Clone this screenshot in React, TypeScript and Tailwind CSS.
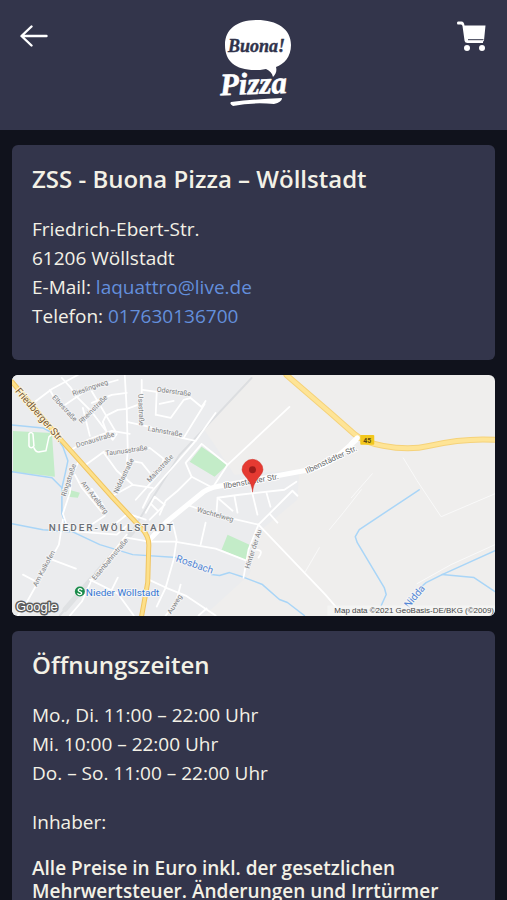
import { ReactNode } from "react";

const STREETS = [
  "M36 401 L52 389 L78 375",
  "M50 390 L55 399 L62 407 L90 388 L118 380",
  "M62 378 L71 388 L76 396 L92 412 L113 440 L117 434",
  "M83 408 L90 436",
  "M92 403 L112 395 L127 393",
  "M90 388 L116 432",
  "M106 430 L103 422 L106 416 L118 410 L127 409",
  "M125 375 L127 410 L128 450 L126 478",
  "M73 449 L88 440 L112 431 L130 434",
  "M127 409 L141 404 M142 380 L142 400",
  "M127 422 L150 427 L182 438 L196 441 L216 413",
  "M143 390 L157 392 L156 415",
  "M157 415 L171 418 L184 400 L191 398 L202 407 L206 401",
  "M160 404 L174 401 M184 438 L205 404 M196 441 L150 494 L143 508",
  "M86 465 L104 452 L130 452 L150 448 L164 459 L160 473 L136 500",
  "M104 453 L117 471 L133 485 L113 496 M133 485 L153 488",
  "M131 461 L142 463 L150 473",
  "M202 444 L186 463 L192 477 L213 488 L228 465 L202 444",
  "M228 465 L290 407",
  "M192 477 L178 491 L166 501 L160 515",
  "M78 463 L72 476 L70 493 L63 514 L67 526 L78 532 L117 535 L127 526",
  "M75 475 L82 488 L105 516 L84 530 M92 489 L104 506",
  "M63 520 L59 545 L44 572 L26 604 L18 616 M52 560 L76 569 M23 575 L36 582",
  "M127 535 L92 580 L82 602 L70 616 M90 580 L118 594 L134 616 M112 590 L118 578",
  "M127 538 L149 542 L175 542 L216 549 L247 561",
  "M173 523 L177 540 L174 560 L166 588 L157 607",
  "M149 580 L166 588 L186 596 L216 616 M181 585 L176 604 L166 616 M207 609 L199 616",
  "M206 523 L201 545",
  "M187 505 L216 515 L259 525 L326 595 L344 616",
  "M259 525 L249 550 L244 578",
  "M259 525 L293 491 L298 496 M270 514 L278 523",
  "M217 512 L218 498 L240 495 L285 490 L297 482",
  "M235 497 L238 513 M252 490 L258 515 M267 493 L271 507",
  "M218 498 L233 511 M253 550 Q266 549 259 558",
  "M146 513 L155 497 L165 505 L150 520 M151 504 L158 511",
  "M108 530 L128 514 L146 520",
];

const PATHS = [
  "M352 498 L373 474 M404 458 L418 481 L442 517 L496 494",
  "M330 530 L344 513 L362 490 M418 584 L452 565 L496 545",
  "M306 572 L320 548",
];

const RIVERS = [
  "M12 425 L43 428 L54 434 L63 447 L68 461 L65 475 L62 488 L62 514 L68 530 L100 545 L133 555 L177 558",
  "M12 472 L52 478 L62 488",
  "M12 524 L43 530 L70 532",
  "M212 575 L220 576 L230 573 L245 578 L263 585 L280 600 L288 603 L305 616",
  "M420 490 L360 530 L356 537 L358 543 L385 588 L387 595 L382 606",
  "M496 551 L443 575 L427 583 L419 590",
  "M443 575 L475 578 L496 592",
];

type Label = { text: string; x: number; y: number; turn: number };

const LABELS: Label[] = [
  { text: "Rieslingweg", x: 91, y: 390, turn: -19 },
  { text: "Elbestraße", x: 63, y: 410, turn: 47 },
  { text: "Rheinstraße", x: 95, y: 411, turn: -45 },
  { text: "Oderstraße", x: 174, y: 394, turn: 8 },
  { text: "Usastraße", x: 139, y: 410, turn: 88 },
  { text: "Lahnstraße", x: 165, y: 434, turn: 10 },
  { text: "Donaustraße", x: 96, y: 442, turn: -17 },
  { text: "Taunusstraße", x: 127, y: 453, turn: -8 },
  { text: "Niddastraße", x: 126, y: 477, turn: -64 },
  { text: "Mainstraße", x: 162, y: 470, turn: -47 },
  { text: "Ringstraße", x: 71, y: 481, turn: -72 },
  { text: "Am Azelberg", x: 93, y: 499, turn: 52 },
  { text: "Am Kalkofen", x: 46, y: 570, turn: -62 },
  { text: "Eisenbahnstraße", x: 112, y: 561, turn: -50 },
  { text: "Wachtelweg", x: 215, y: 517, turn: 16 },
  { text: "Hinter der Au", x: 256, y: 550, turn: -72 },
  { text: "Auweg", x: 177, y: 606, turn: -58 },
];

function AreaMap() {
  return (
    <svg
      viewBox="12 375 484 241"
      role="img"
      aria-label="Karte von Nieder-Wöllstadt"
      className="block h-auto w-full rounded-md bg-[#efeeed]"
      fill="none"
      strokeLinejoin="round"
      strokeLinecap="round"
      fontFamily="Roboto, sans-serif"
      textAnchor="middle"
    >
      <path d="M12 375 H252 L205 430 L235 475 L300 470 L298 500 L262 530 L250 575 L205 616 H12 Z" fill="#ebecee" />
      <path d="M13 431 L52 433 L55 477 L13 472 Z M202 447 L228 465 L215 477 L190 462 Z M228 535 L250 545 L247 561 L222 550 Z M69 490 L80 493 L78 498 L68 497 Z" fill="#c3ecc8" />
      <path d="M252 378 L180 455 L133 530 L60 616" stroke="#dcdee1" strokeWidth="2" />
      <path d="M133 532 L65 610" stroke="#dfe1e3" strokeWidth="5" />
      {RIVERS.map((d) => <path key={d} d={d} stroke="#a9d5f7" strokeWidth="1.5" />)}
      {PATHS.map((d) => <path key={d} d={d} stroke="#f9f9f9" strokeWidth="1" />)}
      {STREETS.map((d) => <path key={d} d={d} stroke="#ffffff" strokeWidth="1.8" />)}
      <path d="M29 434 Q31 431 33 434 L34 446 Q31 450 29 446 Z M34 448 Q36 453 40 452 L46 451 L49 437 L57 430" stroke="#ffffff" strokeWidth="1.5" />
      <path d="M149 541 L167 522 L204 492 Q211 487 228 485 L310 470 Q326 467 341 454 L357 440" stroke="#ffffff" strokeWidth="5" />
      <path d="M12 382 L62 441 L113 498 L143 530 Q150 538 149 548 L148 583 L142 616" stroke="#f0c562" strokeWidth="5" />
      <path d="M12 382 L62 441 L113 498 L143 530 Q150 538 149 548 L148 583 L142 616" stroke="#fde08a" strokeWidth="3" />
      <path d="M287 375 L330 412 L355 434 Q364 442 384 446 Q410 451 430 446 Q466 438 496 440" stroke="#f5d27a" strokeWidth="6" />
      <path d="M287 375 L330 412 L355 434 Q364 442 384 446 Q410 451 430 446 Q466 438 496 440" stroke="#fee496" strokeWidth="4" />
      <path d="M352 444 L358 438" stroke="#ffffff" strokeWidth="5" />

      <g fontSize="7" fill="#7d7f82" stroke="#f4f4f5" strokeWidth="2" paintOrder="stroke">
        {LABELS.map((l) => (
          <text key={l.text} transform={`translate(${l.x} ${l.y}) rotate(${l.turn})`}>{l.text}</text>
        ))}
      </g>
      <g fontSize="8" fill="#6a6c6e" stroke="#ffffff" strokeWidth="2" paintOrder="stroke">
        <text transform="translate(252 484) rotate(-10)">Ilbenstädter Str.</text>
        <text transform="translate(333 462) rotate(-25)">Ilbenstädter Str.</text>
      </g>
      <text transform="translate(37 417) rotate(49)" fontSize="10" fill="#7b5b33" stroke="#fff6dc" strokeWidth="2" paintOrder="stroke">Friedberger Str.</text>
      <text x="112" y="531" fontSize="10" fontWeight="500" letterSpacing="2" fill="#6b6f75" stroke="#f5f5f5" strokeWidth="2" paintOrder="stroke">NIEDER-WÖLLSTADT</text>
      <text transform="translate(194 568) rotate(19)" fontSize="10" fill="#5286d6" stroke="#f5f5f5" strokeWidth="2" paintOrder="stroke">Rosbach</text>
      <text transform="translate(418 599) rotate(-50)" fontSize="10" fill="#5286d6" stroke="#f5f5f5" strokeWidth="2" paintOrder="stroke">Nidda</text>
      <circle cx="80" cy="592" r="5" fill="#1b8c4b" />
      <path d="M82 590 Q80 588 78.500 590 Q78 591.500 80 592 Q82.500 593 81.500 594.500 Q79.500 596 78 594" stroke="#ffffff" strokeWidth="1.300" />
      <text x="86" y="596" fontSize="10" textAnchor="start" fill="#3577d4" stroke="#f5f5f5" strokeWidth="2" paintOrder="stroke">Nieder Wöllstadt</text>

      <rect x="361" y="435" width="14" height="10" rx="1" fill="#f2c71d" />
      <text x="368" y="443" fontSize="7" fontWeight="700" fill="#5c4a10">45</text>

      <path d="M253 492 Q252.500 484 247 478 Q242.500 473 242.500 470 A10.500 10.500 0 0 1 263.500 470 Q263.500 473 259 478 Q253.500 484 253 492 Z" fill="#e53a32" stroke="#cf3029" strokeWidth="0.5" />
      <circle cx="253" cy="470" r="3.500" fill="#9c1c1a" />

      <rect x="328" y="606" width="168" height="10" fill="#f6f6f5" fillOpacity="0.7" />
      <text x="495" y="614" fontSize="8" textAnchor="end" fill="#454545" fontFamily="Liberation Sans, sans-serif">Map data ©2021 GeoBasis-DE/BKG (©2009)</text>
      <text x="16" y="612" fontSize="13" textAnchor="start" fill="#ffffff" stroke="#5d5d5d" strokeWidth="3" paintOrder="stroke" fontFamily="Liberation Sans, sans-serif">Google</text>
    </svg>
  );
}

function Logo() {
  return (
    <svg
      viewBox="0 0 76 88"
      role="img"
      aria-label="Buona Pizza"
      className="h-[88px] w-[76px]"
      fontFamily="Liberation Serif, serif"
      fontStyle="italic"
      fontWeight="700"
      strokeLinejoin="round"
    >
      <path d="M41 0 C61 0 75 9 75 25 C75 37 68 44 60 47 C61 51 60 54 57 57 C56 53 54 51 50 49 C46 50 42 50 39 50 C19 50 9 41 9 25 C9 9 21 0 41 0 Z" fill="#ffffff" />
      <text x="12" y="32" fontSize="18" fill="#30334b" stroke="#30334b" strokeWidth="0.4">Buona!</text>
      <g fontSize="31" transform="rotate(-2 38 70)">
        <text x="4" y="74" fill="#33354b" stroke="#33354b" strokeWidth="4">Pizza</text>
        <text x="4" y="74" fill="#ffffff" stroke="#ffffff" strokeWidth="0.6">Pizza</text>
      </g>
      <path d="M15 82 Q40 79 66 78 Q66 82 58 84 Q36 82 17 86 Q13 84 15 82 Z" fill="#ffffff" />
    </svg>
  );
}

function Header() {
  return (
    <header className="flex items-start justify-between bg-[#33354b] px-5 pt-5 pb-[22px]">
      <button type="button" aria-label="Zurück" className="flex h-8 w-8 items-center">
        <svg viewBox="0 0 28 22" className="h-[22px] w-7" fill="none" stroke="#ffffff" strokeWidth="2.4" strokeLinecap="round" strokeLinejoin="round">
          <path d="M26.500 11 H2 M11.500 1.500 L1.500 11 L11.500 20.500" />
        </svg>
      </button>
      <Logo />
      <button type="button" aria-label="Warenkorb" className="flex h-8 w-8 items-center justify-end">
        <svg viewBox="0 0 30 30" className="h-[30px] w-[30px]" fill="#ffffff">
          <path d="M1 0.500 H4.500 Q7 0.500 7.500 4.500 H28.500 L27 19.500 Q26.800 20.500 26 20.500 L26 22 H10.500 Q8 22 7.600 20 L5.500 5 Q5.200 3.500 4 3.500 H1 Q0 3.500 0 2 Q0 0.500 1 0.500 Z" />
          <path d="M11 18.700 H26.500" stroke="#33354b" strokeWidth="1" />
          <circle cx="10" cy="27" r="3" />
          <circle cx="25" cy="27" r="3" />
        </svg>
      </button>
    </header>
  );
}

function Card({ title, children }: { title: string; children: ReactNode }) {
  return (
    <section className="rounded-md bg-[#33354b] px-5 pt-4 pb-[29px]">
      <h2 className="mb-[18px] text-2xl leading-9 font-semibold">{title}</h2>
      {children}
    </section>
  );
}

export default function App() {
  return (
    <div className="min-h-screen bg-[#10121c] font-['Open_Sans',sans-serif] text-[19px] leading-[29px] text-[#f3f1e6]">
      <Header />
      <main className="flex flex-col gap-[15px] px-3 pt-[15px]">
        <Card title="ZSS - Buona Pizza – Wöllstadt">
          <address className="not-italic">
            <p>Friedrich-Ebert-Str.</p>
            <p>61206 Wöllstadt</p>
            <p>E-Mail: <a href="mailto:laquattro@live.de" className="text-[#638fdc]">laquattro@live.de</a></p>
            <p>Telefon: <a href="tel:017630136700" className="text-[#638fdc]">017630136700</a></p>
          </address>
        </Card>
        <AreaMap />
        <Card title="Öffnungszeiten">
          <p>Mo., Di. 11:00 – 22:00 Uhr</p>
          <p>Mi. 10:00 – 22:00 Uhr</p>
          <p>Do. – So. 11:00 – 22:00 Uhr</p>
          <p className="mt-5">Inhaber:</p>
          <p className="mt-5 leading-[23px] font-semibold">
            Alle Preise in Euro inkl. der gesetzlichen Mehrwertsteuer. Änderungen und Irrtürmer
          </p>
        </Card>
      </main>
    </div>
  );
}
